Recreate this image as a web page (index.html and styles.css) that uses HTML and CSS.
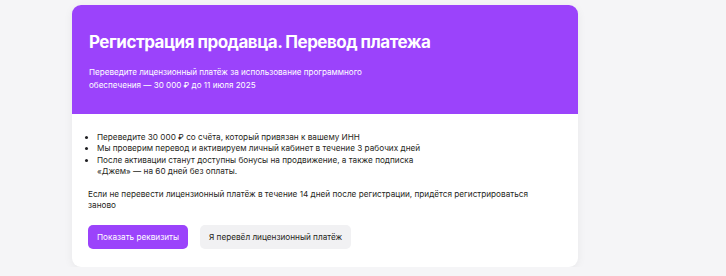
FILE: index.html
```html
<!DOCTYPE html>
<html lang="ru">
<head>
  <meta charset="UTF-8" />
  <title>Регистрация продавца</title>
  <link rel="stylesheet" href="styles.css">
</head>
<body>

  <!-- Payment card -->
  <div class="card">
    <div class="card-head">
      <h1 class="title">Регистрация продавца. Перевод платежа</h1>
      <p class="subtitle">
        Переведите лицензионный платёж за использование программного<br>
        обеспечения — 30 000 ₽ до 11 июля 2025
      </p>
    </div>

    <div class="card-body">
      <ul class="steps">
        <li>Переведите 30 000 ₽ со счёта, который привязан к вашему ИНН</li>
        <li>Мы проверим перевод и активируем личный кабинет в течение 3 рабочих дней</li>
        <li>После активации станут доступны бонусы на продвижение, а также подписка<br>«Джем» — на 60 дней без оплаты.</li>
      </ul>
      <p class="note">Если не перевести лицензионный платёж в течение 14 дней после регистрации, придётся регистрироваться заново</p>
      <div class="actions">
        <button class="btn btn-primary">Показать реквизиты</button>
        <button class="btn btn-secondary">Я перевёл лицензионный платёж</button>
      </div>
    </div>
  </div>

</body>
</html>
```

FILE: styles.css
```css
body, html {
  margin: 0;
  padding: 0;
  font-family: 'Inter', 'Noto Sans', sans-serif;
  background: #f5f5f7;
  overflow: hidden;
}

body {
  padding: 5px 0 0 72px;
}

.card {
  width: 506px;
  height: 262px;
  background: #ffffff;
  border-radius: 9px;
  overflow: hidden;
  box-shadow: 0 2px 10px rgba(0, 0, 0, 0.06);
}

.card-head {
  background: #9b43fb;
  color: #ffffff;
  height: 109px;
  box-sizing: border-box;
  padding: 25px 17px 0;
}

.title {
  margin: 0;
  font-size: 17px;
  line-height: 24px;
  font-weight: 700;
  letter-spacing: -0.5px;
}

.subtitle {
  margin: 12px 0 0;
  font-size: 8.1px;
  line-height: 13px;
}

.card-body {
  padding: 18px 17px 0 16px;
  color: #1f1f22;
  font-size: 8.2px;
  line-height: 11.4px;
}

.steps {
  margin: 0;
  padding-left: 9px;
}

.note {
  margin: 11px 0 0;
  width: 450px;
}

.actions {
  display: flex;
  gap: 12px;
  margin-top: 14px;
}

.btn {
  height: 24px;
  border: none;
  border-radius: 5px;
  padding: 0 9px;
  font-family: inherit;
  font-size: 8.2px;
}

.btn-primary {
  background: #9b43fb;
  color: #ffffff;
}

.btn-secondary {
  background: #f1f1f3;
  color: #1f1f22;
}
```
